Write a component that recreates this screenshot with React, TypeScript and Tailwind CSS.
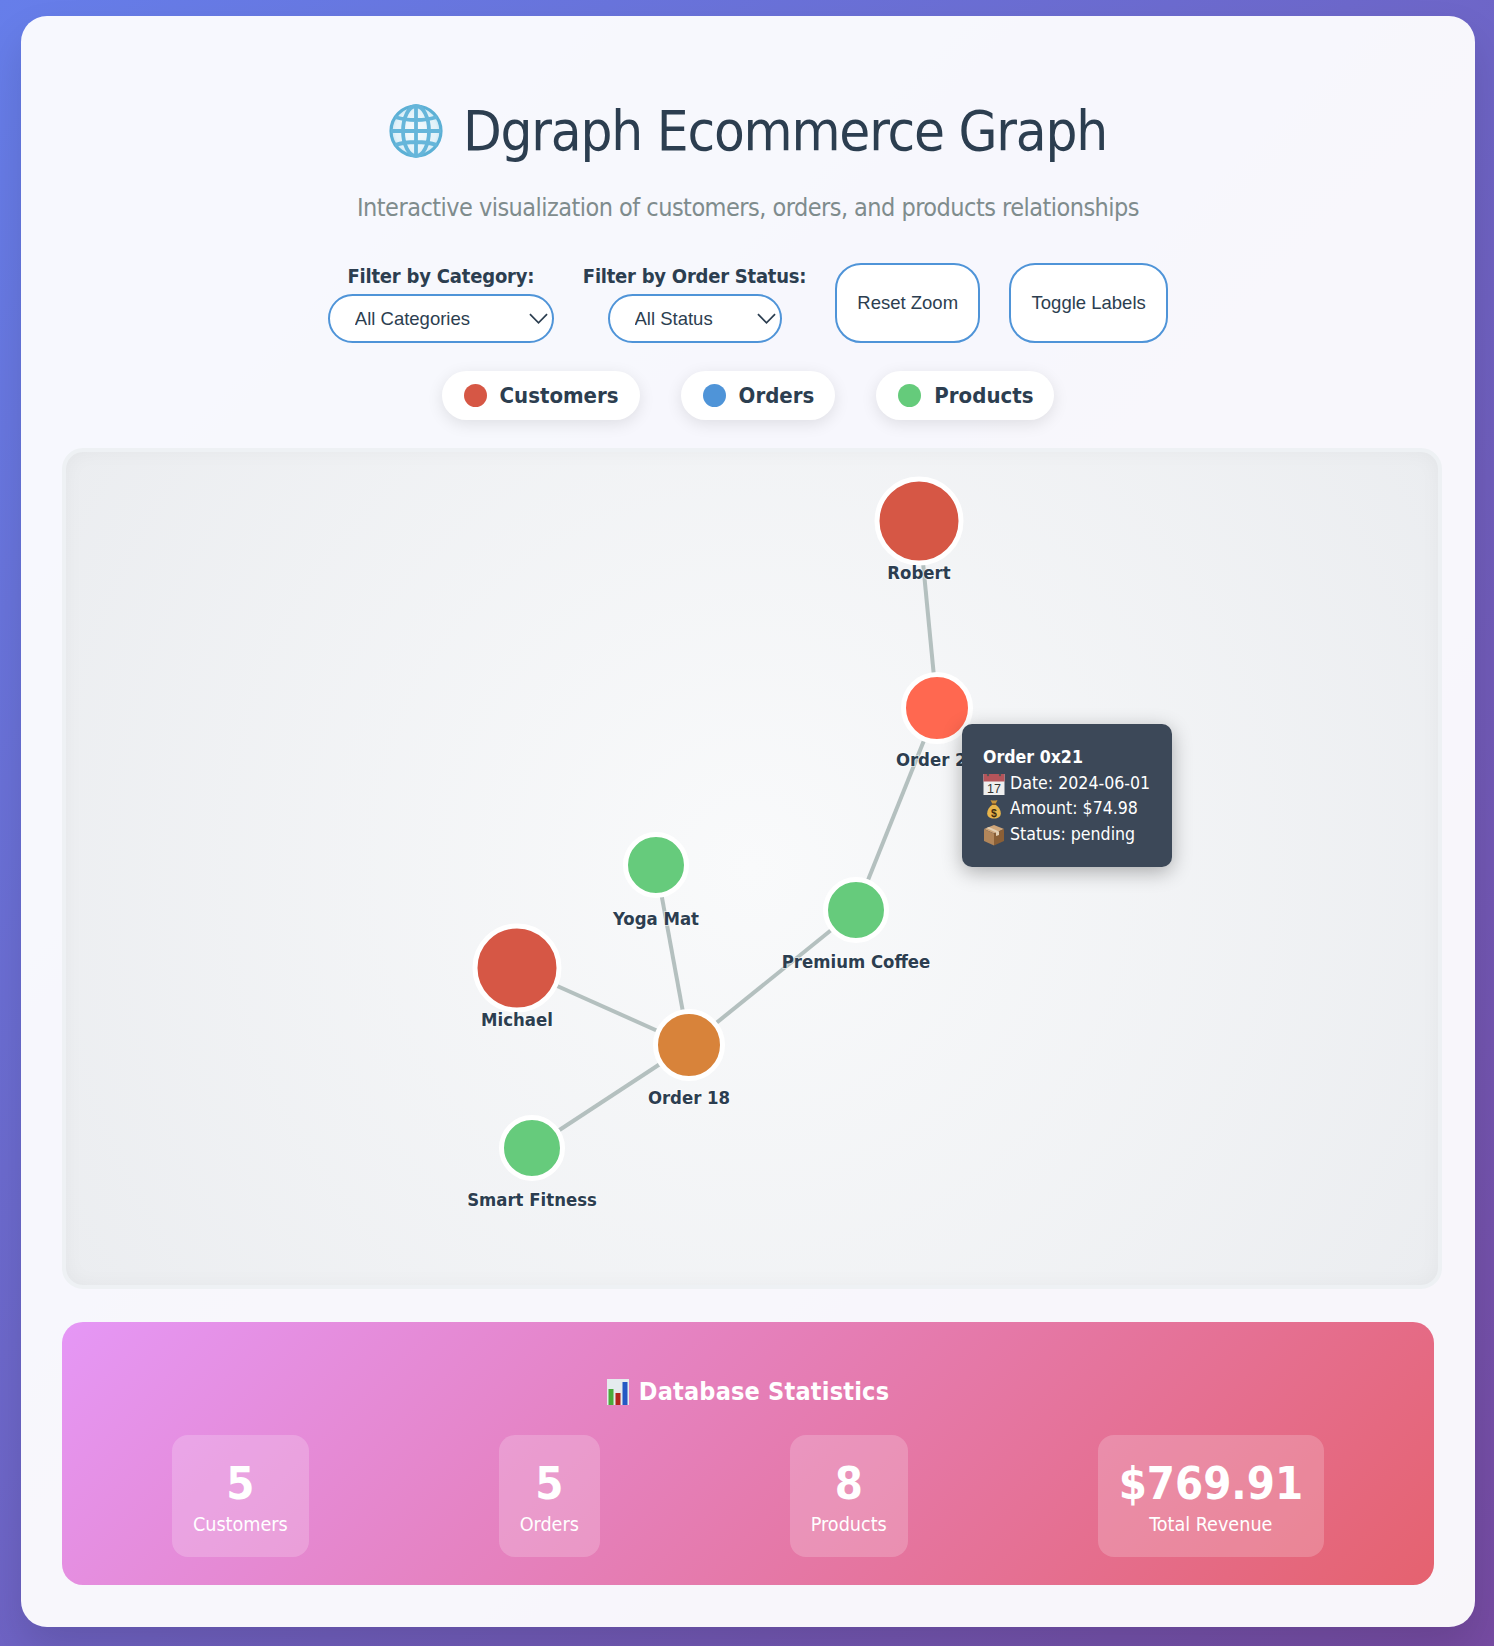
import { useId } from "react";

const NODES = [
  { id: "robert", label: "Robert", x: 853, y: 69, r: 42, fill: "#d65745", labelY: 122 },
  { id: "order21", label: "Order 21", x: 871, y: 256, r: 33.5, fill: "#ff6850", labelY: 309 },
  { id: "coffee", label: "Premium Coffee", x: 790, y: 458, r: 30.5, fill: "#66cb7c", labelY: 511 },
  { id: "yoga", label: "Yoga Mat", x: 590, y: 413, r: 30.5, fill: "#66cb7c", labelY: 468 },
  { id: "michael", label: "Michael", x: 451, y: 516, r: 42, fill: "#d65745", labelY: 569 },
  { id: "order18", label: "Order 18", x: 623, y: 593, r: 33.5, fill: "#d8833a", labelY: 647 },
  { id: "fitness", label: "Smart Fitness", x: 466, y: 696, r: 30.5, fill: "#66cb7c", labelY: 749 },
];

const LINKS = [
  ["robert", "order21"],
  ["order21", "coffee"],
  ["coffee", "order18"],
  ["yoga", "order18"],
  ["michael", "order18"],
  ["order18", "fitness"],
];

const STATS = [
  { value: "5", label: "Customers" },
  { value: "5", label: "Orders" },
  { value: "8", label: "Products" },
  { value: "$769.91", label: "Total Revenue" },
];

const LEGEND = [
  { label: "Customers", dot: "bg-[#d65745]" },
  { label: "Orders", dot: "bg-[#4f94d8]" },
  { label: "Products", dot: "bg-[#65cb7b]" },
];

function GlobeIcon() {
  const id = useId();
  return (
    <svg viewBox="0 0 54 56" className="h-[56px] w-[54px] shrink-0">
      <defs>
        <radialGradient id={id} cx="50%" cy="50%" r="55%">
          <stop offset="0%" stopColor="#f6fbfd" />
          <stop offset="75%" stopColor="#e2f2f9" />
          <stop offset="100%" stopColor="#b5def0" />
        </radialGradient>
      </defs>
      <circle cx="27" cy="28" r="25" fill={`url(#${id})`} stroke="#5cb0d5" strokeWidth="3.2" />
      <g fill="none" stroke="#66b6da" strokeWidth="3.8">
        <ellipse cx="27" cy="28" rx="13" ry="25" />
        <path d="M27 3v50M2 28h50M6 14c12 4 30 4 42 0M6 42c12-4 30-4 42 0" />
      </g>
    </svg>
  );
}

function CalendarIcon() {
  return (
    <svg viewBox="0 0 22 22" className="h-[22px] w-[22px] shrink-0">
      <rect x="0.5" y="1" width="21" height="21" fill="#efefef" />
      <rect x="0.5" y="1" width="21" height="7.5" fill="#b5545a" />
      <circle cx="5" cy="2" r="1.2" fill="#555" />
      <circle cx="17" cy="2" r="1.2" fill="#555" />
      <text x="11" y="20" textAnchor="middle" fontSize="12.5" fill="#333" fontFamily="Liberation Sans, sans-serif">
        17
      </text>
    </svg>
  );
}

function MoneyIcon() {
  return (
    <svg viewBox="0 0 22 22" className="h-[22px] w-[22px] shrink-0">
      <path d="M7.500 2c1.800.8 5.200.8 7 0l-1.800 3.800H9.300z" fill="#c9953c" />
      <rect x="8.800" y="5.500" width="4.400" height="1.500" fill="#7d5520" />
      <path d="M9 7c-3 2-4.800 5.300-4.800 8.300 0 3.700 2.800 5.200 6.800 5.200s6.800-1.500 6.800-5.200c0-3-1.800-6.300-4.800-8.300z" fill="#e8b54b" />
      <text x="11" y="18.500" textAnchor="middle" fontSize="10.500" fontWeight="700" fill="#3d2b10" fontFamily="Liberation Sans, sans-serif">
        $
      </text>
    </svg>
  );
}

function BoxIcon() {
  return (
    <svg viewBox="0 0 22 22" className="h-[22px] w-[22px] shrink-0">
      <path d="M11 1 21 5l-10 4.500L1 5z" fill="#cfa67a" />
      <path d="M1 5l10 4.500v12L1 17z" fill="#b2865a" />
      <path d="M21 5 11 9.500v12L21 17z" fill="#8a5f36" />
      <path d="M6 3 16 7.500v3.500l-3 1V8.500L3.500 4z" fill="#e3cfb2" />
    </svg>
  );
}

function ChartIcon() {
  return (
    <svg viewBox="0 0 22 26" className="h-[26px] w-[22px] shrink-0">
      <rect width="22" height="26" fill="#e5ebee" />
      <rect x="1.500" y="10" width="5" height="16" fill="#4aab3a" />
      <rect x="8.500" y="14" width="5" height="12" fill="#b3261e" />
      <rect x="15.500" y="3" width="5" height="23" fill="#2458c4" />
    </svg>
  );
}

function GraphCanvas() {
  const byId = Object.fromEntries(NODES.map((n) => [n.id, n]));
  return (
    <svg className="block h-[833px] w-[1371px]" viewBox="0 0 1371 833">
      {LINKS.map(([a, b]) => (
        <line
          key={a + b}
          x1={byId[a].x}
          y1={byId[a].y}
          x2={byId[b].x}
          y2={byId[b].y}
          stroke="#b4c0bf"
          strokeWidth="4"
        />
      ))}
      {NODES.map((n) => (
        <g key={n.id}>
          <circle cx={n.x} cy={n.y} r={n.r} fill={n.fill} stroke="#fff" strokeWidth="5" />
          <text
            x={n.x}
            y={n.labelY}
            textAnchor="middle"
            dominantBaseline="middle"
            className="fill-[#2c3e50] text-[18.4px] font-bold"
            stroke="#fff"
            strokeOpacity="0.5"
            strokeWidth="2"
            paintOrder="stroke"
          >
            {n.label}
          </text>
        </g>
      ))}
    </svg>
  );
}

export default function App() {
  return (
    <div className="min-h-[1646px] bg-[linear-gradient(135deg,#667eea_0%,#764ba2_100%)] pt-4 pb-[19px] pl-[21px] pr-[19px] font-['DejaVu_Sans_Condensed','DejaVu_Sans',sans-serif] text-[#2c3e50]">
      <div className="h-[1611px] rounded-[26px] bg-white/95 px-[41px] pt-[42px] shadow-[0_21px_42px_rgba(0,0,0,0.12)]">
        <h1 className="mt-[39px] flex h-[68px] items-center justify-center gap-[20px] text-[56px] font-normal leading-[68px] tracking-[-1.2px]">
          <GlobeIcon />
          <span>Dgraph Ecommerce Graph</span>
        </h1>
        <p className="mt-[28px] h-[30px] text-center text-[25px] leading-[30px] tracking-[-0.53px] text-[#7f8c8d]">
          Interactive visualization of customers, orders, and products relationships
        </p>

        <div className="mt-[40px] flex h-[80px] items-end justify-center gap-[29px]">
          <div className="flex flex-col items-center">
            <label className="mb-[5px] text-[20px] font-bold leading-[26px] tracking-[-0.2px]">Filter by Category:</label>
            <SelectBox value="All Categories" width="w-[226px]" />
          </div>
          <div className="flex flex-col items-center">
            <label className="mb-[5px] text-[20px] font-bold leading-[26px] tracking-[-0.24px]">Filter by Order Status:</label>
            <SelectBox value="All Status" width="w-[174px]" />
          </div>
          <button className="h-[80px] w-[145px] rounded-[26px] border-2 border-[#4f94d8] bg-white font-['Liberation_Sans',sans-serif] text-[18.5px] text-[#2c3e50]">
            Reset Zoom
          </button>
          <button className="h-[80px] w-[159px] rounded-[26px] border-2 border-[#4f94d8] bg-white font-['Liberation_Sans',sans-serif] text-[18.5px] text-[#2c3e50]">
            Toggle Labels
          </button>
        </div>

        <div className="mt-[28px] flex justify-center gap-[41px]">
          {LEGEND.map((item) => (
            <div
              key={item.label}
              className="flex h-[49px] items-center gap-[13px] rounded-[26px] bg-white pl-[22px] pr-[21px] text-[22px] font-bold shadow-[0_4px_16px_rgba(0,0,0,0.1)]"
            >
              <span className={`h-[23px] w-[23px] rounded-full ${item.dot}`} />
              {item.label}
            </div>
          ))}
        </div>

        <div className="relative mt-[28px] h-[841px] w-[1380px] overflow-hidden rounded-[21px] border-4 border-[#eef1f4] bg-[radial-gradient(circle,#f9fafb_0%,#ebedf0_100%)] shadow-[inset_0_0_20px_rgba(0,0,0,0.04)]">
          <GraphCanvas />
          <div className="absolute left-[896px] top-[272px] h-[143px] w-[210px] rounded-[10px] bg-[#3c4858] px-[21px] pt-[21px] text-[17.6px] leading-[25.7px] text-white shadow-[0_5px_20px_rgba(0,0,0,0.3)]">
            <div className="font-bold">Order 0x21</div>
            <div className="flex items-center gap-[5px]"><CalendarIcon />Date: 2024-06-01</div>
            <div className="flex items-center gap-[5px]"><MoneyIcon />Amount: $74.98</div>
            <div className="flex items-center gap-[5px]"><BoxIcon />Status: pending</div>
          </div>
        </div>

        <div className="mt-[33px] h-[263px] rounded-[21px] bg-[linear-gradient(135deg,#e597f6_0%,#e5626f_100%)] px-[15px] pt-[55px] text-white">
          <h3 className="flex h-[30px] items-center justify-center gap-[10px] text-[25px] font-bold tracking-[0.2px]">
            <ChartIcon />
            Database Statistics
          </h3>
          <div className="mt-[28px] flex justify-around">
            {STATS.map((stat) => (
              <div key={stat.label} className="h-[122px] rounded-[16px] bg-white/20 px-[21px] pt-[24px] text-center">
                <div className="text-[45px] font-bold leading-[50px]">{stat.value}</div>
                <div className="mt-[3px] text-[19.6px] leading-[26px]">{stat.label}</div>
              </div>
            ))}
          </div>
        </div>
      </div>
    </div>
  );
}

function SelectBox({ value, width }: { value: string; width: string }) {
  return (
    <div className={`relative ${width}`}>
      <select className="h-[49px] w-full appearance-none rounded-[26px] border-2 border-[#4f94d8] bg-white pl-[25px] font-['Liberation_Sans',sans-serif] text-[18.5px] text-[#2c3e50]">
        <option>{value}</option>
      </select>
      <svg viewBox="0 0 20 11" className="pointer-events-none absolute right-[6px] top-[19px] h-[11px] w-[19px]" fill="none" stroke="#2c3e50" strokeWidth="1.800">
        <path d="M1 1l9 9 9-9" />
      </svg>
    </div>
  );
}
